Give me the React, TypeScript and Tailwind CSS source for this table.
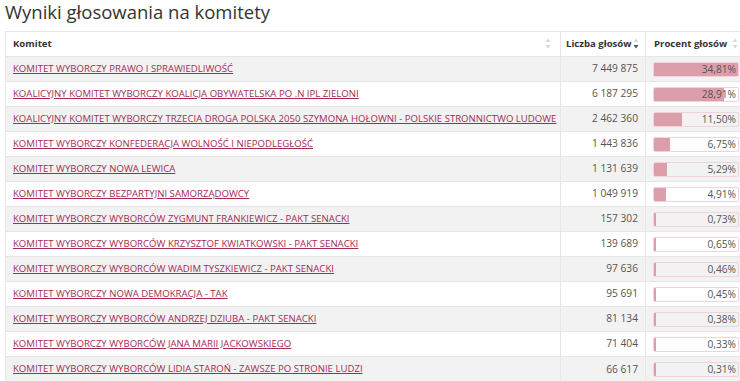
import React from "react";

const rows: [string, string, number][] = [
  ["KOMITET WYBORCZY PRAWO I SPRAWIEDLIWOŚĆ", "7 449 875", 34.81],
  ["KOALICYJNY KOMITET WYBORCZY KOALICJA OBYWATELSKA PO .N IPL ZIELONI", "6 187 295", 28.91],
  ["KOALICYJNY KOMITET WYBORCZY TRZECIA DROGA POLSKA 2050 SZYMONA HOŁOWNI - POLSKIE STRONNICTWO LUDOWE", "2 462 360", 11.5],
  ["KOMITET WYBORCZY KONFEDERACJA WOLNOŚĆ I NIEPODLEGŁOŚĆ", "1 443 836", 6.75],
  ["KOMITET WYBORCZY NOWA LEWICA", "1 131 639", 5.29],
  ["KOMITET WYBORCZY BEZPARTYJNI SAMORZĄDOWCY", "1 049 919", 4.91],
  ["KOMITET WYBORCZY WYBORCÓW ZYGMUNT FRANKIEWICZ - PAKT SENACKI", "157 302", 0.73],
  ["KOMITET WYBORCZY WYBORCÓW KRZYSZTOF KWIATKOWSKI - PAKT SENACKI", "139 689", 0.65],
  ["KOMITET WYBORCZY WYBORCÓW WADIM TYSZKIEWICZ - PAKT SENACKI", "97 636", 0.46],
  ["KOMITET WYBORCZY NOWA DEMOKRACJA - TAK", "95 691", 0.45],
  ["KOMITET WYBORCZY WYBORCÓW ANDRZEJ DZIUBA - PAKT SENACKI", "81 134", 0.38],
  ["KOMITET WYBORCZY WYBORCÓW JANA MARII JACKOWSKIEGO", "71 404", 0.33],
  ["KOMITET WYBORCZY WYBORCÓW LIDIA STAROŃ - ZAWSZE PO STRONIE LUDZI", "66 617", 0.31],
];

const SortIcon = ({ active }: { active?: boolean }) => (
  <svg width="6" height="11" viewBox="0 0 6 11" className="ml-auto shrink-0">
    <path d="M3 0.5 L5.5 4 L0.5 4 Z" fill="#d8d8d8" />
    <path d="M3 10.5 L5.5 7 L0.5 7 Z" fill={active ? "#555" : "#d8d8d8"} />
  </svg>
);

const Bar = ({ pct }: { pct: number }) => (
  <div className="relative h-[15px] w-[86px] rounded-[2px] border border-[#f3d3da] overflow-hidden">
    <div
      className="absolute left-0 top-0 h-full bg-[#dc9eab]"
      style={{ width: `${Math.max(pct / 34.81, 0.02) * 100}%` }}
    />
    <span className="relative block pr-[2px] text-right text-[10.2px] leading-[13px] text-[#555]">
      {pct.toFixed(2).replace(".", ",")}%
    </span>
  </div>
);

const App = () => {
  return (
    <div className="w-[740px] h-[381px] overflow-hidden bg-white font-['Open_Sans',sans-serif] text-[#333]">
      <h2 className="text-[18.5px] leading-[24px] pl-[5px] mb-[7px]">
        Wyniki głosowania na komitety
      </h2>
      <div className="ml-[5px] w-[745px]">
        <table className="w-full border-collapse text-[9.6px] table-fixed">
          <colgroup>
            <col className="w-[555px]" />
            <col className="w-[85px]" />
            <col className="w-[105px]" />
          </colgroup>
          <thead>
            <tr className="h-[25px] border-t border-[#e6e6e6]">
              <th className="border-l border-[#e6e6e6] pl-[7px] text-left font-bold whitespace-nowrap">
                <div className="flex items-center pr-[9px]">
                  Komitet <SortIcon />
                </div>
              </th>
              <th className="border-l border-[#e6e6e6] pl-[5px] text-left font-bold whitespace-nowrap">
                <div className="flex items-center pr-[6px]">
                  Liczba głosów <SortIcon active />
                </div>
              </th>
              <th className="border-l border-[#e6e6e6] pl-[8px] text-left font-bold whitespace-nowrap">
                <div className="flex items-center pr-[13px]">
                  Procent głosów <SortIcon />
                </div>
              </th>
            </tr>
          </thead>
          <tbody>
            {rows.map(([name, votes, pct], i) => (
              <tr
                key={name}
                className={`h-[25px] border-t border-[#e6e6e6] ${i % 2 === 0 ? "bg-[#f2f2f2]" : "bg-white"}`}
              >
                <td className="border-l border-[#e6e6e6] px-[7px] whitespace-nowrap">
                  <a href="#" className="text-[#a52a52] underline">
                    {name}
                  </a>
                </td>
                <td className="border-l border-[#e6e6e6] px-[7px] text-right text-[10.2px] text-[#555] whitespace-nowrap">
                  {votes}
                </td>
                <td className="border-l border-[#e6e6e6] px-[7px]">
                  <Bar pct={pct} />
                </td>
              </tr>
            ))}
          </tbody>
        </table>
      </div>
    </div>
  );
};

export default App;
